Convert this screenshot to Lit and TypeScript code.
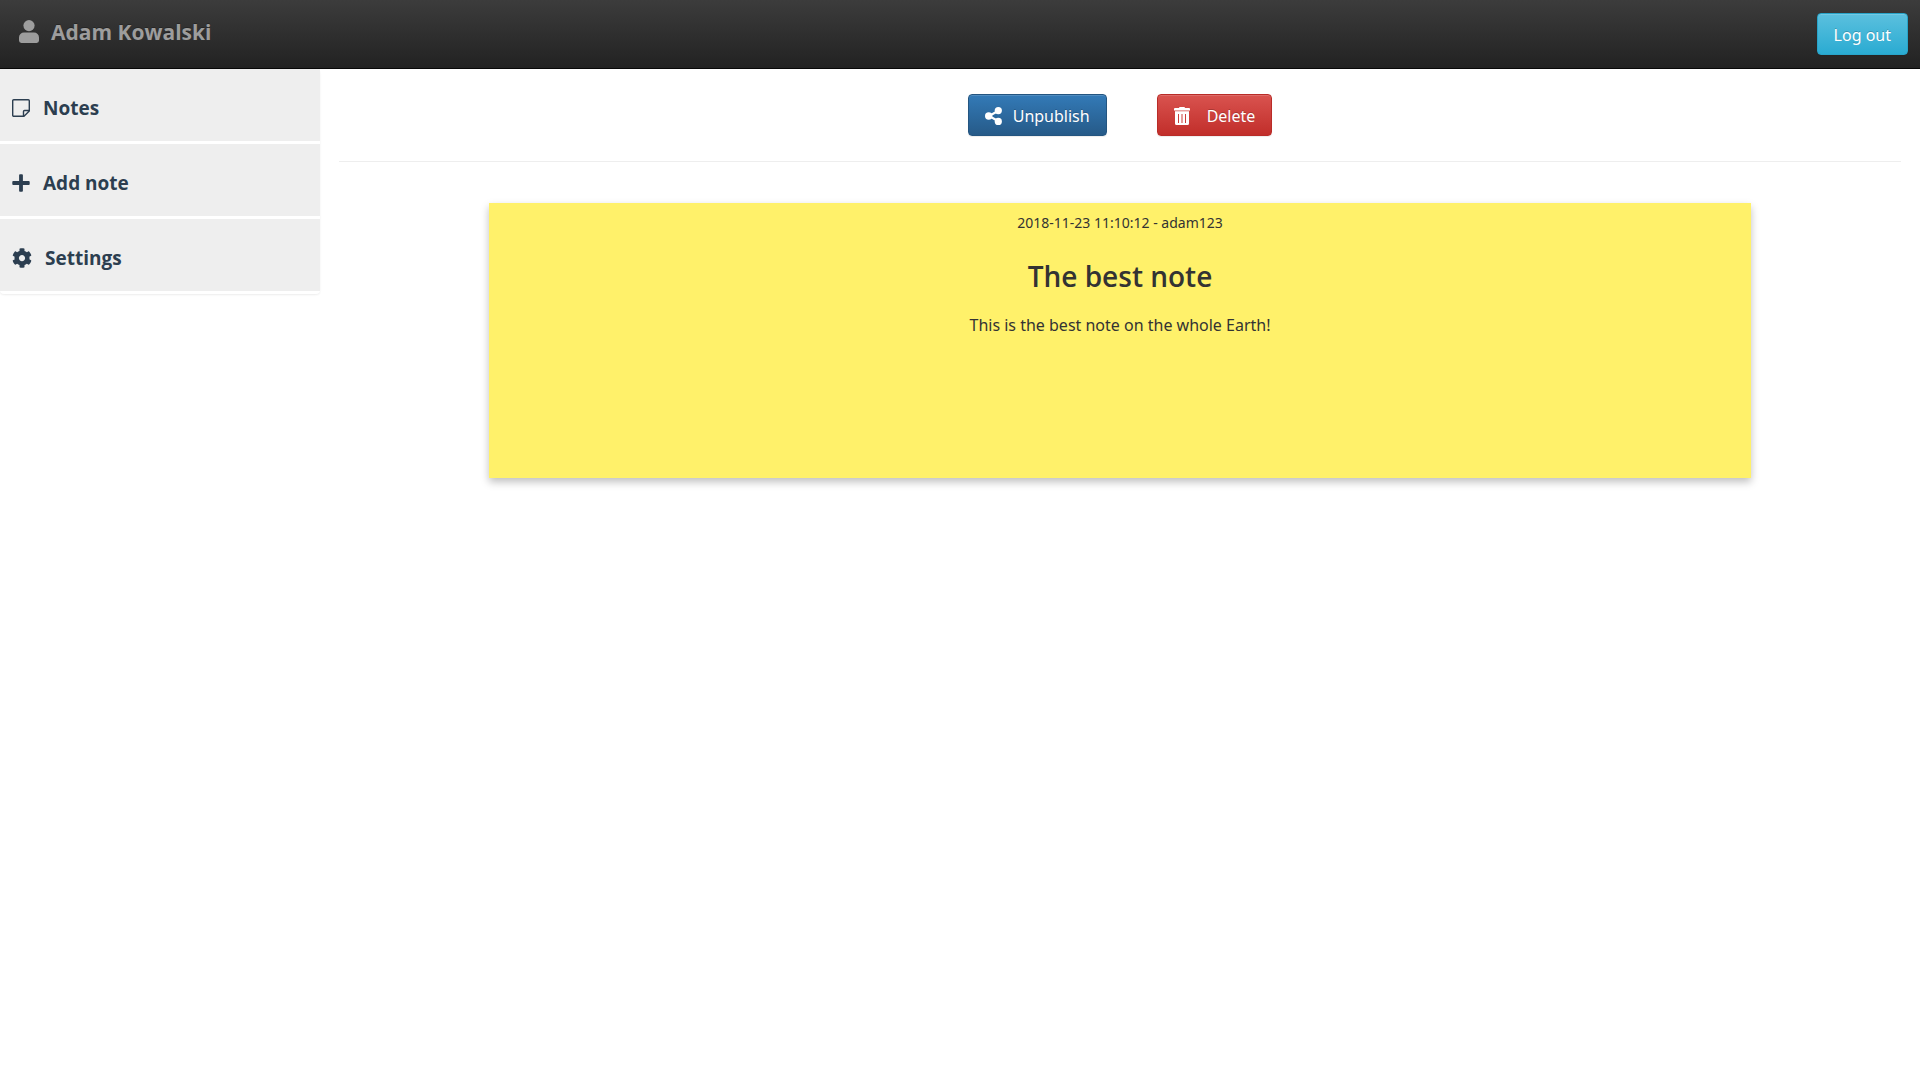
import { LitElement, html, css, svg } from "lit";
import { customElement } from "lit/decorators.js";

const icon = (name: string, box: string, body: unknown) =>
  html`<svg class="icon ${name}" viewBox=${box} fill="currentColor" aria-hidden="true">${body}</svg>`;

const userIcon = icon("user", "0 0 20 23", svg`
  <circle cx="10" cy="5.6" r="5.6" />
  <path d="M5 12.6h10a5 5 0 0 1 5 5V20.600a2.400 2.400 0 0 1-2.400 2.400H2.400A2.400 2.400 0 0 1 0 20.600V17.600a5 5 0 0 1 5-5z" />`);

const noteIcon = icon("note", "0 0 18 18", svg`
  <path d="M1.700.7h14.600a1 1 0 0 1 1 1V12L12 17.300H1.700a1 1 0 0 1-1-1V1.700a1 1 0 0 1 1-1zM11.500 17.300V12.500a1 1 0 0 1 1-1h4.800"
    fill="none" stroke="currentColor" stroke-width="1.400" stroke-linejoin="round" />`);

const plusIcon = icon("plus", "0 0 18 18", svg`
  <path d="M7.100 1.200a.9.9 0 0 1 .9-.9h2a.9.9 0 0 1 .9.9v5.900h5.900a.9.9 0 0 1 .9.9v2a.9.9 0 0 1-.9.9h-5.900v5.900a.9.9 0 0 1-.9.9H8a.9.9 0 0 1-.9-.9v-5.900H1.200a.9.9 0 0 1-.9-.9V8a.9.9 0 0 1 .9-.9h5.900z" />`);

const gearIcon = icon("gear", "0 0 512 512", svg`
  <path d="M487.400 315.700l-42.600-24.600c4.300-23.200 4.300-47 0-70.200l42.600-24.600c4.900-2.800 7.100-8.600 5.500-14-11.100-35.600-30-67.800-54.700-94.600-3.800-4.100-10-5.100-14.800-2.300L380.800 110c-17.900-15.400-38.500-27.300-60.800-35.100V25.800c0-5.600-3.900-10.500-9.400-11.700-36.700-8.200-74.300-7.800-109.200 0-5.500 1.200-9.400 6.100-9.400 11.700V75c-22.200 7.900-42.800 19.800-60.800 35.100L88.700 85.500c-4.900-2.800-11-1.900-14.800 2.300-24.700 26.700-43.600 58.900-54.700 94.600-1.700 5.400.6 11.200 5.500 14L67.300 221c-4.300 23.200-4.300 47 0 70.200l-42.600 24.600c-4.900 2.800-7.100 8.600-5.500 14 11.100 35.600 30 67.800 54.700 94.600 3.800 4.100 10 5.100 14.800 2.300l42.600-24.600c17.900 15.400 38.500 27.300 60.800 35.100v49.200c0 5.600 3.900 10.500 9.400 11.700 36.700 8.200 74.300 7.800 109.200 0 5.500-1.200 9.400-6.100 9.400-11.700v-49.200c22.200-7.900 42.800-19.800 60.800-35.100l42.600 24.600c4.900 2.800 11 1.900 14.800-2.300 24.700-26.700 43.600-58.900 54.700-94.600 1.500-5.500-.7-11.300-5.600-14.100zM256 336c-44.100 0-80-35.900-80-80s35.900-80 80-80 80 35.900 80 80-35.900 80-80 80z" />`);

const shareIcon = icon("share", "0 0 17 18", svg`
  <path d="M13.500 3.700L4 9l9.500 5.300" fill="none" stroke="currentColor" stroke-width="2.200" />
  <circle cx="13.300" cy="3.600" r="3.600" /><circle cx="3.700" cy="9" r="3.700" /><circle cx="13.300" cy="14.400" r="3.600" />`);

const trashIcon = icon("trash", "0 0 16 18", svg`
  <path d="M5 1a1 1 0 0 1 1-1h4a1 1 0 0 1 1 1h4a1 1 0 0 1 1 1v1.600H0V2a1 1 0 0 1 1-1z" />
  <path fill-rule="evenodd" d="M1 4.300h14V16.500a1.500 1.500 0 0 1-1.500 1.500h-11A1.500 1.500 0 0 1 1 16.500zM4 7v9h1V7zm3.500 0v9h1V7zM11 7v9h1V7z" />`);

@customElement("app-root")
export class AppRoot extends LitElement {
  static styles = css`
    :host {
      display: block;
      min-height: 100vh;
      background: #fff;
      color: #333;
      font: 400 16px/24px "Noto Sans", "Open Sans", sans-serif;
    }
    * { box-sizing: border-box; }
    .icon { display: block; flex: none; }
    .user { width: 20px; height: 23px; }
    .note, .plus { width: 18px; height: 18px; }
    .gear { width: 20px; height: 20px; }
    .share { width: 17px; height: 18px; }
    .trash { width: 16px; height: 18px; }

    .topbar {
      display: flex;
      align-items: center;
      justify-content: space-between;
      padding: 13px 12px 13px 19px;
      border-bottom: 1px solid #080808;
      background: linear-gradient(#3c3c3c, #222);
    }
    .brand, .link, .title { font-family: "Open Sans", "Noto Sans", sans-serif; }
    .brand {
      display: flex;
      align-items: center;
      gap: 12px;
      padding-bottom: 5px;
      color: #9d9d9d;
      font-size: 21px;
      font-weight: 700;
      text-decoration: none;
      text-shadow: 0 -1px 0 rgba(0, 0, 0, 0.25);
    }

    .button {
      display: flex;
      align-items: center;
      height: 42px;
      padding: 2px 16px 0;
      border: 1px solid;
      border-radius: 4px;
      color: #fff;
      font: inherit;
      text-shadow: 0 -1px 0 rgba(0, 0, 0, 0.2);
      box-shadow: inset 0 1px 0 rgba(255, 255, 255, 0.15), 0 1px 1px rgba(0, 0, 0, 0.075);
      cursor: pointer;
    }
    .info { border-color: #28a4c9; background: linear-gradient(#5bc0de, #2aabd2); }
    .primary { gap: 11px; border-color: #245580; background: linear-gradient(#337ab7, #265a88); }
    .danger { gap: 17px; border-color: #b92c28; background: linear-gradient(#d9534f, #c12e2a); }

    .layout {
      display: grid;
      grid-template-columns: minmax(200px, 1fr) 5fr;
      align-items: start;
    }
    .menu {
      display: grid;
      gap: 3px;
      margin: 0;
      padding: 0 0 3px;
      list-style: none;
      border-radius: 4px;
      box-shadow: 0 1px 2px rgba(0, 0, 0, 0.075);
    }
    .link {
      display: flex;
      align-items: center;
      gap: 13px;
      height: 72px;
      padding: 6px 12px 0;
      background: #eee;
      color: #2c3e50;
      font-size: 19px;
      font-weight: 700;
      text-decoration: none;
    }
    .content { padding: 25px 19px; }
    .actions {
      display: flex;
      justify-content: center;
      gap: 50px;
      padding-bottom: 25px;
      border-bottom: 1px solid #eee;
    }
    .card {
      min-height: 275px;
      margin: 41px 150px 0;
      padding: 8px 16px;
      background: #fff16a;
      box-shadow: 0 4px 8px rgba(0, 0, 0, 0.25);
      text-align: center;
    }
    .meta { margin: 0; font-size: 14px; }
    .title { margin: 23px 0 19px; font-size: 28px; line-height: 36px; font-weight: 600; }
    .text { margin: 0; }
  `;

  render() {
    return html`
      <header class="topbar">
        <a class="brand" href="#profile">${userIcon}<span>Adam Kowalski</span></a>
        <button class="button info" type="button">Log out</button>
      </header>
      <div class="layout">
        <nav>
          <ul class="menu">
            <li><a class="link" href="#notes">${noteIcon}<span>Notes</span></a></li>
            <li><a class="link" href="#add">${plusIcon}<span>Add note</span></a></li>
            <li><a class="link" href="#settings">${gearIcon}<span>Settings</span></a></li>
          </ul>
        </nav>
        <main class="content">
          <div class="actions">
            <button class="button primary" type="button">${shareIcon}<span>Unpublish</span></button>
            <button class="button danger" type="button">${trashIcon}<span>Delete</span></button>
          </div>
          <article class="card">
            <p class="meta">2018-11-23 11:10:12 - adam123</p>
            <h1 class="title">The best note</h1>
            <p class="text">This is the best note on the whole Earth!</p>
          </article>
        </main>
      </div>
    `;
  }
}
